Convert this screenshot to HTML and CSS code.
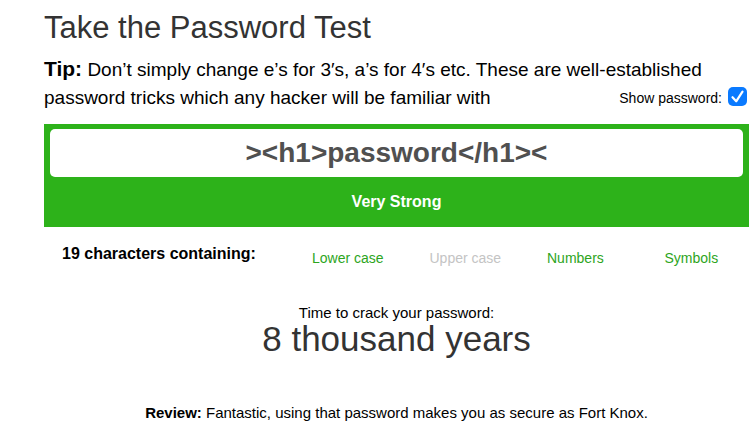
FILE: index.html
```html
<!DOCTYPE html>
<html lang="en">
<head>
<meta charset="utf-8">
<meta name="viewport" content="width=device-width, initial-scale=1">
<title>Take the Password Test</title>
<link rel="stylesheet" href="styles.css">
</head>
<body>
<main class="test">
  <h1 class="title">Take the Password Test</h1>
  <div class="intro">
    <p class="tip"><strong class="tip-label">Tip:</strong> Don’t simply change e’s for 3′s, a’s for 4′s etc. These are well-established password tricks which any hacker will be familiar with</p>
    <label class="show" for="show">Show password: <input class="check" type="checkbox" id="show" checked></label>
  </div>
  <section class="meter">
    <input class="password" type="text" aria-label="Password" value="&gt;&lt;h1&gt;password&lt;/h1&gt;&lt;">
    <p class="rating">Very Strong</p>
  </section>
  <section class="contents">
    <p class="count">19 characters containing:</p>
    <ul class="kinds">
      <li class="kind">Lower case</li>
      <li class="kind kind-missing">Upper case</li>
      <li class="kind">Numbers</li>
      <li class="kind">Symbols</li>
    </ul>
  </section>
  <section class="result">
    <p class="result-label">Time to crack your password:</p>
    <p class="time">8 thousand years</p>
    <p class="review"><strong>Review:</strong> Fantastic, using that password makes you as secure as Fort Knox.</p>
  </section>
</main>
</body>
</html>
```
FILE: styles.css
```css
* {
  box-sizing: border-box;
}

body {
  margin: 0;
  background: #fff;
  color: #000;
  font-family: "Liberation Sans", Helvetica, Arial, sans-serif;
  font-size: 15px;
}

p,
h1,
ul {
  margin: 0;
  padding: 0;
}

.test {
  padding: 8px 1px 16px 44px;
}

.title {
  color: #333;
  font-size: 31px;
  font-weight: 400;
  line-height: 40px;
}

.intro {
  display: grid;
  padding-top: 7px;
}

.tip,
.show {
  grid-area: 1 / 1;
}

.tip {
  padding-right: 40px;
  font-size: 19px;
  line-height: 28px;
}

.tip-label {
  font-size: 21px;
}

.show {
  display: flex;
  align-items: center;
  gap: 6px;
  place-self: end;
  padding-right: 2px;
  font-size: 14px;
  line-height: 28px;
}

.check {
  appearance: none;
  width: 19px;
  height: 19px;
  margin: 0 0 4px;
  border-radius: 5px;
  background: #0a7aff url("data:image/svg+xml,%3Csvg xmlns='http://www.w3.org/2000/svg' viewBox='0 0 19 19'%3E%3Cpath d='M4.5 10.2 8.2 14.3 14.5 4.7' fill='none' stroke='white' stroke-width='2.2' stroke-linecap='round' stroke-linejoin='round'/%3E%3C/svg%3E") center / contain no-repeat;
}

.check:not(:checked) {
  border: 1px solid #aaa;
  background: #fff;
}

.meter {
  margin-top: 12px;
  padding: 5px 6px 10px;
  background: #2db21a;
}

.password {
  display: block;
  width: 100%;
  height: 48px;
  padding: 0;
  border: 0;
  border-radius: 5px;
  background: #fff;
  color: #505050;
  font: bold 28px "Liberation Sans", Helvetica, Arial, sans-serif;
  text-align: center;
}

.rating {
  padding-top: 10px;
  color: #fff;
  font-size: 16px;
  font-weight: 700;
  line-height: 30px;
  text-align: center;
}

.contents {
  display: grid;
  grid-template-columns: 1fr 2fr;
  padding-top: 17px;
}

.count {
  padding-left: 18px;
  font-size: 16px;
  font-weight: 700;
  line-height: 20px;
  white-space: nowrap;
}

.kinds {
  display: grid;
  grid-template-columns: repeat(4, 1fr);
  padding-top: 4px;
  list-style: none;
}

.kind {
  padding-left: 33px;
  color: #2da51d;
  font-size: 14px;
  line-height: 20px;
  white-space: nowrap;
}

.kind-missing {
  color: #c4c4c4;
}

.result {
  padding-top: 35px;
  text-align: center;
}

.result-label {
  line-height: 20px;
}

.time {
  color: #333;
  font-size: 35px;
  line-height: 32px;
}

.review {
  padding-top: 48px;
  line-height: 20px;
}
```
